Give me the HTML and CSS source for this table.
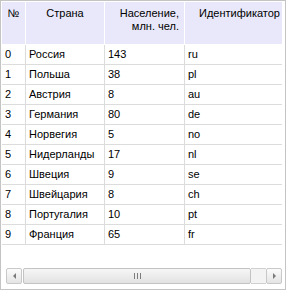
FILE: index.html
```html
<!DOCTYPE html>
<html>
<head>
<meta charset="utf-8">
<link rel="stylesheet" href="styles.css">
</head>
<body>
<div class="grid">
  <div class="viewport">
    <div class="row head">
      <div class="cell hc">№</div>
      <div class="cell hc">Страна</div>
      <div class="cell hc right">Население,<br>млн. чел.</div>
      <div class="cell hc">Идентификатор</div>
    </div>
    <div class="row"><div class="cell">0</div><div class="cell">Россия</div><div class="cell">143</div><div class="cell">ru</div></div>
    <div class="row"><div class="cell">1</div><div class="cell">Польша</div><div class="cell">38</div><div class="cell">pl</div></div>
    <div class="row"><div class="cell">2</div><div class="cell">Австрия</div><div class="cell">8</div><div class="cell">au</div></div>
    <div class="row"><div class="cell">3</div><div class="cell">Германия</div><div class="cell">80</div><div class="cell">de</div></div>
    <div class="row"><div class="cell">4</div><div class="cell">Норвегия</div><div class="cell">5</div><div class="cell">no</div></div>
    <div class="row"><div class="cell">5</div><div class="cell">Нидерланды</div><div class="cell">17</div><div class="cell">nl</div></div>
    <div class="row"><div class="cell">6</div><div class="cell">Швеция</div><div class="cell">9</div><div class="cell">se</div></div>
    <div class="row"><div class="cell">7</div><div class="cell">Швейцария</div><div class="cell">8</div><div class="cell">ch</div></div>
    <div class="row"><div class="cell">8</div><div class="cell">Португалия</div><div class="cell">10</div><div class="cell">pt</div></div>
    <div class="row"><div class="cell">9</div><div class="cell">Франция</div><div class="cell">65</div><div class="cell">fr</div></div>
  </div>
  <div class="hscroll">
    <div class="sbtn"><span class="tri-left"></span></div>
    <div class="thumb"><span class="grip"></span><span class="grip"></span><span class="grip"></span></div>
    <div class="track"></div>
    <div class="sbtn"><span class="tri-right"></span></div>
  </div>
</div>
</body>
</html>
```

FILE: styles.css
```css
html, body {
  margin: 0;
  padding: 0;
  background: #ffffff;
}
body {
  font-family: "Liberation Sans", Arial, sans-serif;
  font-size: 11px;
  color: #000;
}
.grid {
  width: 286px;
  height: 290px;
  box-sizing: border-box;
  border: 1px solid #c4c4c4;
  padding: 1px 3px 0 1px;
  display: flex;
  flex-direction: column;
}
.viewport {
  flex: 1;
  overflow: hidden;
  min-height: 0;
}
.row {
  display: grid;
  grid-template-columns: 24px 79px 80px 110px;
  width: 293px;
  height: 20px;
}
.row.head {
  height: 43px;
}
.cell {
  box-sizing: border-box;
  border-right: 1px solid #dcdcdc;
  border-bottom: 1px solid #dcdcdc;
  padding: 3px 0 0 3px;
  white-space: nowrap;
  overflow: hidden;
  line-height: 13px;
}
.hc {
  background: #e8e8fa;
  border-right: 1px solid #ffffff;
  border-bottom: 1px solid #ffffff;
  text-align: center;
  padding: 5px 2px 0 2px;
}
.hc.right {
  text-align: right;
  padding-right: 5px;
}
.hscroll {
  display: flex;
  height: 16px;
  margin: 3px 0 5px 4px;
}
.sbtn {
  width: 16px;
  box-sizing: border-box;
  border: 1px solid #c8c8c8;
  border-radius: 2px;
  background: linear-gradient(#fbfbfb, #e4e4e4);
  display: flex;
  align-items: center;
  justify-content: center;
}
.tri-left {
  width: 0;
  height: 0;
  border-top: 3px solid transparent;
  border-bottom: 3px solid transparent;
  border-right: 3px solid #7a7a7a;
}
.tri-right {
  width: 0;
  height: 0;
  border-top: 3px solid transparent;
  border-bottom: 3px solid transparent;
  border-left: 3px solid #7a7a7a;
}
.thumb {
  flex: 1;
  box-sizing: border-box;
  border: 1px solid #c3c3c3;
  border-radius: 2px;
  background: linear-gradient(#f6f6f6, #e2e2e2);
  display: flex;
  align-items: center;
  justify-content: center;
  gap: 2px;
  margin-left: 1px;
}
.grip {
  width: 1px;
  height: 6px;
  background: #7c7c7c;
}
.track {
  width: 15px;
  box-sizing: border-box;
  border-top: 1px solid #d0d0d0;
  border-bottom: 1px solid #d0d0d0;
  background: #f3f3f3;
}
```
